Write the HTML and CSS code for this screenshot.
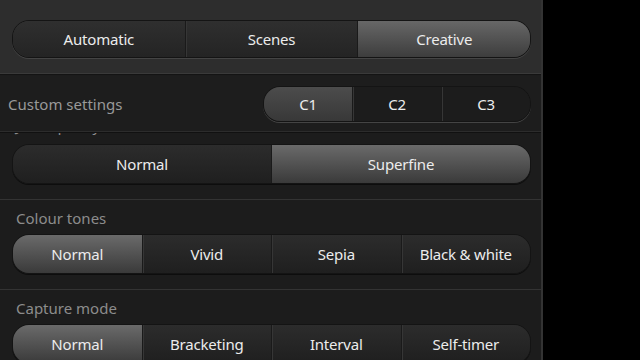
FILE: index.html
```html
<!DOCTYPE html>
<html lang="en">
  <head>
    <meta charset="UTF-8" />
    <meta name="viewport" content="width=device-width, initial-scale=1.0" />
    <title>Camera settings</title>
    <link rel="stylesheet" href="styles.css">
  </head>

  <body>
    <div class="panel">
      <div class="mode-bar">
        <div class="segmented">
          <div class="seg">Automatic</div>
          <div class="seg">Scenes</div>
          <div class="seg selected">Creative</div>
        </div>
      </div>

      <div class="custom-row">
        <span class="custom-label">Custom settings</span>
        <div class="segmented small">
          <div class="seg selected">C1</div>
          <div class="seg">C2</div>
          <div class="seg">C3</div>
        </div>
      </div>

      <div class="scroll">
        <div class="section first">
          <div class="section-label">JPEG quality</div>
          <div class="segmented">
            <div class="seg">Normal</div>
            <div class="seg selected">Superfine</div>
          </div>
        </div>

        <div class="section">
          <div class="section-label">Colour tones</div>
          <div class="segmented">
            <div class="seg selected">Normal</div>
            <div class="seg">Vivid</div>
            <div class="seg">Sepia</div>
            <div class="seg">Black &amp; white</div>
          </div>
        </div>

        <div class="section">
          <div class="section-label">Capture mode</div>
          <div class="segmented">
            <div class="seg selected">Normal</div>
            <div class="seg">Bracketing</div>
            <div class="seg">Interval</div>
            <div class="seg">Self-timer</div>
          </div>
        </div>
      </div>
    </div>
  </body>
</html>
```

FILE: styles.css
```css
body {
  margin: 0;
  background: #000;
  font-family: "Noto Sans", sans-serif;
  color: #ececec;
  overflow: hidden;
}

.panel {
  width: 541px;
  height: 360px;
  background: #1c1c1c;
  border-right: 2px solid #333;
  overflow: hidden;
}

.mode-bar {
  height: 74px;
  padding: 20px 10px 0 12px;
  box-sizing: border-box;
  background: #2d2d2d;
  border-bottom: 1px solid #3a3a3a;
  box-shadow: 0 1px 0 #141414;
}

.segmented {
  display: flex;
  height: 36px;
  border-radius: 17px;
  overflow: hidden;
  border: 1px solid #141414;
  box-shadow: 0 1px 0 #444;
}

.seg {
  flex: 1;
  display: flex;
  justify-content: center;
  align-items: center;
  font-size: 15px;
  letter-spacing: -0.2px;
  background: linear-gradient(#2f2f2f, #242424);
  border-left: 1px solid #1a1a1a;
  box-shadow: inset 1px 0 0 #363636;
}

.seg:first-child {
  border-left: none;
  box-shadow: none;
}

.seg.selected {
  background: linear-gradient(#676767, #3d3d3d);
  box-shadow: none;
}

.custom-row {
  display: flex;
  align-items: center;
  justify-content: space-between;
  height: 55px;
  margin-top: 2px;
  padding: 0 10px 0 8px;
  background: #1d1d1d;
  border-bottom: 1px solid #2c2c2c;
  box-shadow: 0 1px 0 #111;
}

.custom-label {
  font-size: 15px;
  color: #999;
}

.segmented.small {
  width: 266px;
  height: 34px;
}

.segmented.small .seg {
  background: #1c1c1c;
}

.segmented.small .seg.selected {
  background: linear-gradient(#4c4c4c, #383838);
}

.scroll {
  height: 227px;
  margin-top: 1px;
  overflow: hidden;
}

.section {
  padding: 0 10px 15px 12px;
  border-bottom: 1px solid #333;
}

.section.first {
  margin-top: -23px;
}

.section-label {
  height: 34px;
  padding-top: 3px;
  box-sizing: border-box;
  line-height: 31px;
  padding-left: 4px;
  font-size: 15px;
  color: #8c8c8c;
}

.section.first .section-label {
  padding-top: 0;
  line-height: 30px;
}

.section .segmented {
  height: 38px;
  box-shadow: 0 1px 0 #0d0d0d;
}

.section .seg {
  background: linear-gradient(#2c2c2c, #1f1f1f);
}

.section .seg.selected {
  background: linear-gradient(#6a6a6a, #3a3a3a);
}
```
